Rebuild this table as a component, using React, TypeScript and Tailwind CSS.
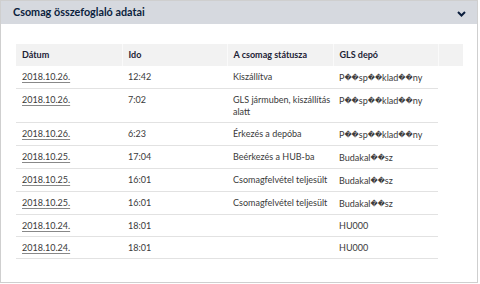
import React from "react";

const rows: { d: string; t: string; s: string; g: string }[] = [
  { d: "2018.10.26.", t: "12:42", s: "Kiszállítva", g: "P��sp��klad��ny" },
  { d: "2018.10.26.", t: "7:02", s: "GLS jármuben, kiszállítás alatt", g: "P��sp��klad��ny" },
  { d: "2018.10.26.", t: "6:23", s: "Érkezés a depóba", g: "P��sp��klad��ny" },
  { d: "2018.10.25.", t: "17:04", s: "Beérkezés a HUB-ba", g: "Budakal��sz" },
  { d: "2018.10.25.", t: "16:01", s: "Csomagfelvétel teljesült", g: "Budakal��sz" },
  { d: "2018.10.25.", t: "16:01", s: "Csomagfelvétel teljesült", g: "Budakal��sz" },
  { d: "2018.10.24.", t: "18:01", s: "", g: "HU000" },
  { d: "2018.10.24.", t: "18:01", s: "", g: "HU000" },
];

const td = "pl-[6px] pr-[2px] pt-[5px] pb-[4px] leading-[12px] align-top border-b border-[#e2e2e2]";

function Depot({ text }: { text: string }) {
  const parts = Array.from(text);
  return (
    <>
      {parts.map((c, i) =>
        c === "\uFFFD" ? (
          <span key={i} className="text-[7px] align-[1px]">
            {c}
          </span>
        ) : (
          <React.Fragment key={i}>{c}</React.Fragment>
        )
      )}
    </>
  );
}

export default function App() {
  return (
    <div
      className="w-[478px] h-[283px] border border-[#cfcfcf] bg-white flex flex-col"
      style={{ fontFamily: 'Lato, "DejaVu Sans", sans-serif' }}
    >
      <div className="h-[23px] bg-[#d6d9df] flex items-center justify-between pl-[12px] pr-[11px] shrink-0">
        <span className="text-[10.8px] font-bold text-[#0b1e3d]">
          Csomag összefoglaló adatai
        </span>
        <svg width="9" height="6" viewBox="0 0 9 6" className="mt-[2px]">
          <path d="M1 1 L4.5 4.5 L8 1" stroke="#0b1e3d" strokeWidth="2" fill="none" />
        </svg>
      </div>
      <div className="pl-[15px] pr-[14px] pt-[20px]">
        <table className="table-fixed border-collapse w-[447px] text-[9px] text-[#3a3a3a]">
          <colgroup>
            <col className="w-[106px]" />
            <col className="w-[105px]" />
            <col className="w-[106px]" />
            <col className="w-[105px]" />
            <col className="w-[25px]" />
          </colgroup>
          <thead>
            <tr className="bg-[#f2f2f2] h-[22px]">
              {["Dátum", "Ido", "A csomag státusza", "GLS depó", ""].map((h, i) => (
                <th
                  key={i}
                  className={`text-left font-bold text-[9px] text-[#1c2235] px-[6px] py-0 leading-[12px] ${
                    i < 4 ? "border-r border-[#fafafa]" : ""
                  }`}
                >
                  {h}
                </th>
              ))}
            </tr>
          </thead>
          <tbody>
            {rows.map((r, i) => (
              <tr key={i}>
                <td className={td}>
                  <span className="underline decoration-[#888] underline-offset-2">{r.d}</span>
                </td>
                <td className={td}>{r.t}</td>
                <td className={td}>{r.s}</td>
                <td className={`${td} whitespace-nowrap`}>
                  <Depot text={r.g} />
                </td>
                <td></td>
              </tr>
            ))}
          </tbody>
        </table>
      </div>
    </div>
  );
}
